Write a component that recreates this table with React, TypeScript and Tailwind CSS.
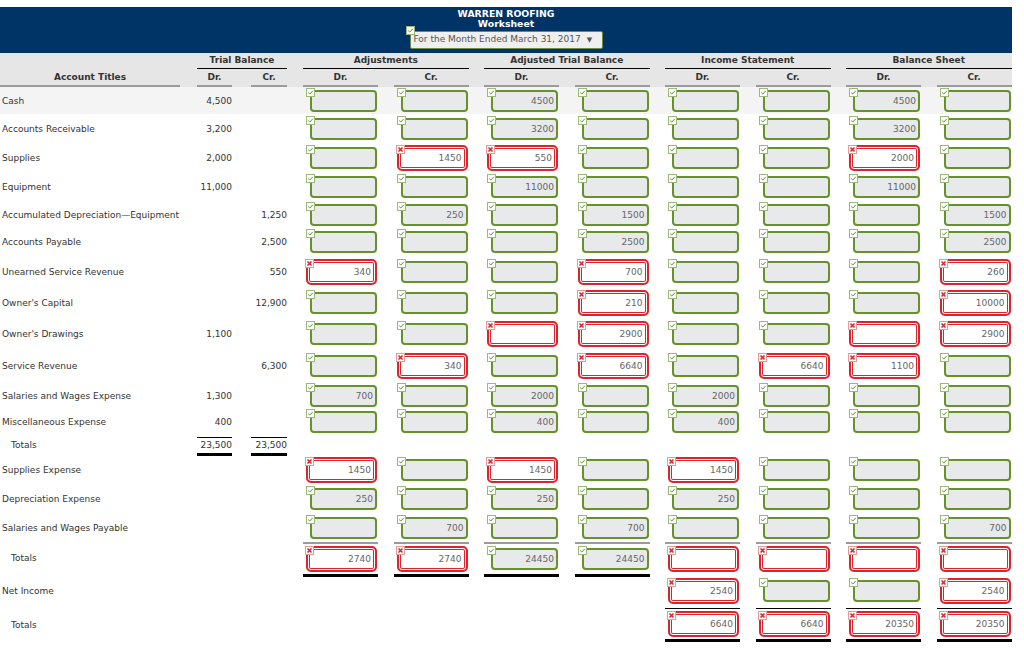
import React from 'react';

type Cell = [string, boolean] | null;

interface Row {
  label: string;
  h: string;
  dr?: string;
  cr?: string;
  indent?: boolean;
  tbTotal?: boolean;
  cells: Cell[];
}

const G = (v = ''): Cell => [v, true];
const R = (v = ''): Cell => [v, false];

const COLS = 'grid grid-cols-[197px_54px_52px_repeat(7,90.5px)_75px]';

const rows: Row[] = [
  { label: 'Cash', h: 'h-[27px]', dr: '4,500', cells: [G(), G(), G('4500'), G(), G(), G(), G('4500'), G()] },
  { label: 'Accounts Receivable', h: 'h-[29px]', dr: '3,200', cells: [G(), G(), G('3200'), G(), G(), G(), G('3200'), G()] },
  { label: 'Supplies', h: 'h-[29px]', dr: '2,000', cells: [G(), R('1450'), R('550'), G(), G(), G(), R('2000'), G()] },
  { label: 'Equipment', h: 'h-[29px]', dr: '11,000', cells: [G(), G(), G('11000'), G(), G(), G(), G('11000'), G()] },
  { label: 'Accumulated Depreciation\u2014Equipment', h: 'h-[27px]', cr: '1,250', cells: [G(), G('250'), G(), G('1500'), G(), G(), G(), G('1500')] },
  { label: 'Accounts Payable', h: 'h-[28px]', cr: '2,500', cells: [G(), G(), G(), G('2500'), G(), G(), G(), G('2500')] },
  { label: 'Unearned Service Revenue', h: 'h-[31px]', cr: '550', cells: [R('340'), G(), G(), R('700'), G(), G(), G(), R('260')] },
  { label: "Owner's Capital", h: 'h-[31px]', cr: '12,900', cells: [G(), G(), G(), R('210'), G(), G(), G(), R('10000')] },
  { label: "Owner's Drawings", h: 'h-[32px]', dr: '1,100', cells: [G(), G(), R(), R('2900'), G(), G(), R(), R('2900')] },
  { label: 'Service Revenue', h: 'h-[31px]', cr: '6,300', cells: [G(), R('340'), G(), R('6640'), G(), R('6640'), R('1100'), G()] },
  { label: 'Salaries and Wages Expense', h: 'h-[29px]', dr: '1,300', cells: [G('700'), G(), G('2000'), G(), G('2000'), G(), G(), G()] },
  { label: 'Miscellaneous Expense', h: 'h-[24px]', dr: '400', cells: [G(), G(), G('400'), G(), G('400'), G(), G(), G()] },
  { label: 'Totals', h: 'h-[22px]', dr: '23,500', cr: '23,500', indent: true, tbTotal: true, cells: [null, null, null, null, null, null, null, null] },
  { label: 'Supplies Expense', h: 'h-[28px]', cells: [R('1450'), G(), R('1450'), G(), R('1450'), G(), G(), G()] },
  { label: 'Depreciation Expense', h: 'h-[29px]', cells: [G('250'), G(), G('250'), G(), G('250'), G(), G(), G()] },
  { label: 'Salaries and Wages Payable', h: 'h-[29px]', cells: [G(), G('700'), G(), G('700'), G(), G(), G(), G('700')] },
  { label: 'Totals', h: 'h-[32px]', indent: true, cells: [R('2740'), R('2740'), G('24450'), G('24450'), R(), R(), R(), R()] },
  { label: 'Net Income', h: 'h-[34px]', cells: [null, null, null, null, R('2540'), G(), G(), R('2540')] },
  { label: 'Totals', h: 'h-[34px]', indent: true, cells: [null, null, null, null, R('6640'), R('6640'), R('20350'), R('20350')] },
];

const Mark = ({ ok }: { ok: boolean }) =>
  ok ? (
    <span className="absolute left-[-6px] top-[-4px] w-[9px] h-[9px] bg-white border border-[#9cb97a] flex items-center justify-center">
      <svg width="7" height="7" viewBox="0 0 7 7">
        <path d="M1.2 3.6 L2.8 5 L5.8 1.8" fill="none" stroke="#5f9127" strokeWidth="1" />
      </svg>
    </span>
  ) : (
    <span className="absolute left-[-3px] top-[-2px] w-[9px] h-[9px] bg-white border border-[#e39a9a] flex items-center justify-center">
      <svg width="7" height="7" viewBox="0 0 7 7">
        <path d="M1.5 1.5 L5.5 5.5 M5.5 1.5 L1.5 5.5" fill="none" stroke="#d8262c" strokeWidth="1.6" />
      </svg>
    </span>
  );

const Box = ({ c }: { c: Cell }) => {
  if (!c) return null;
  const [v, ok] = c;
  return ok ? (
    <div className="relative ml-[7px] w-[67px] h-[22px] rounded-[4px] border-2 border-[#65922b] bg-[#e8e9eb] flex items-center justify-end pr-[2px] pt-[2px] text-[#666]">
      {v}
      <Mark ok />
    </div>
  ) : (
    <div className="relative ml-[3px] w-[71px] h-[26px] rounded-[5px] border-2 border-[#d8262c] bg-white shadow-[inset_0_0_0_1px_#fff,inset_0_0_0_2px_#d8262c] flex items-center justify-end pr-[4px] pt-[2px] text-[#666]">
      {v}
      <Mark ok={false} />
    </div>
  );
};

export default function App() {
  return (
    <div className="pt-[7px] w-[1012px] text-[9px] text-[#333] font-['DejaVu_Sans',Verdana,sans-serif]">
      {/* title band */}
      <div className="bg-[#003466] h-[46px] flex flex-col items-center pt-[2px] text-white">
        <div className="font-bold text-[9.3px] leading-[10px]">WARREN ROOFING</div>
        <div className="font-bold text-[9.3px] leading-[10px]">Worksheet</div>
        <div className="relative mt-[2px] h-[18px] w-[193px] bg-[#efefef] border border-[#6e8a4a] rounded-[2px] flex items-center pl-[3px] text-[#555]">
          <span>For the Month Ended March 31, 2017</span>
          <span className="ml-[6px] text-[7px]">▼</span>
          <span className="absolute left-[-5px] top-[-6px] w-[9px] h-[9px] bg-white border border-[#9cb97a] flex items-center justify-center">
            <svg width="7" height="7" viewBox="0 0 7 7">
              <path d="M1.2 3.6 L2.8 5 L5.8 1.8" fill="none" stroke="#5f9127" strokeWidth="1" />
            </svg>
          </span>
        </div>
      </div>

      {/* column headers */}
      <div className="bg-[#e6e6e6] font-bold">
        <div className={`${COLS} h-[16px]`}>
          <div />
          <div className="col-span-2">
            <div className="w-[90px] h-[16px] leading-[14px] text-center border-b border-black">Trial Balance</div>
          </div>
          {['Adjustments', 'Adjusted Trial Balance', 'Income Statement', 'Balance Sheet'].map((t) => (
            <div key={t} className="col-span-2">
              <div className="w-[165.5px] h-[16px] leading-[14px] text-center border-b border-black">{t}</div>
            </div>
          ))}
        </div>
        <div className={`${COLS} h-[18px]`}>
          <div className="w-[180px] h-[18px] leading-[16px] text-center border-b-2 border-[#9b9b9b]">Account Titles</div>
          <div className="w-[35px] h-[18px] leading-[16px] text-center border-b-2 border-[#9b9b9b]">Dr.</div>
          <div className="w-[36px] h-[18px] leading-[16px] text-center border-b-2 border-[#9b9b9b]">Cr.</div>
          {['Dr.', 'Cr.', 'Dr.', 'Cr.', 'Dr.', 'Cr.', 'Dr.', 'Cr.'].map((t, i) => (
            <div key={i} className="w-[75px] h-[18px] leading-[16px] text-center border-b-2 border-[#9b9b9b]">{t}</div>
          ))}
        </div>
      </div>

      {/* body */}
      {rows.map((r, ri) => (
        <div key={ri} className={`${COLS} ${r.h} ${ri === 0 ? 'bg-[#f4f4f4]' : ''}`}>
          <div className={`flex items-center pt-[2px] ${r.indent ? 'pl-[11px]' : 'pl-[2px]'}`}>{r.label}</div>
          <div className="flex items-center pt-[2px]">
            <div className={`w-[35px] text-right ${r.tbTotal ? 'h-[19px] leading-[15px] border-t border-b-[3px] border-black' : ''}`}>{r.dr}</div>
          </div>
          <div className="flex items-center pt-[2px]">
            <div className={`w-[36px] text-right ${r.tbTotal ? 'h-[19px] leading-[15px] border-t border-b-[3px] border-black' : ''}`}>{r.cr}</div>
          </div>
          {r.cells.map((c, ci) => {
            let line = '';
            if (ri === 16) line = 'border-t-2 border-[#9b9b9b]';
            if (ri === 17 && ci < 4) line = 'border-t-[3px] border-black';
            if (ri === 18 && ci >= 4) line = 'border-t border-b-[3px] border-black';
            return (
              <div key={ci} className={`w-[75px] flex items-center ${line}`}>
                <Box c={c} />
              </div>
            );
          })}
        </div>
      ))}
    </div>
  );
}
